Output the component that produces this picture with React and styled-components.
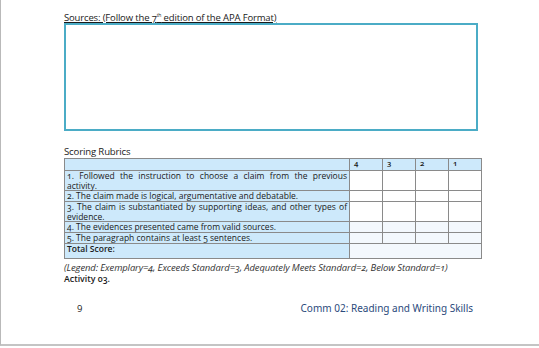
import React from 'react'
import styled, { createGlobalStyle } from 'styled-components'

const GlobalStyle = createGlobalStyle`
  html, body {
    margin: 0;
    padding: 0;
    background: #ffffff;
  }
  body {
    font-family: "Open Sans", "Noto Sans", sans-serif;
    color: #1a1a1a;
  }
`

const Page = styled.div`
  width: 539px;
  height: 346px;
  box-sizing: border-box;
  border-left: 1px solid #b9b9b9;
  border-bottom: 2px solid #c4c4c4;
  padding: 12px 0 0 63px;
  display: flex;
  flex-direction: column;
  font-variant-numeric: oldstyle-nums;
`

const Heading = styled.div`
  font-size: ${p => p.$size || 9.5}px;
  line-height: 11px;
  letter-spacing: -0.15px;
  text-decoration: ${p => (p.$underline ? 'underline' : 'none')};
  margin-top: ${p => p.$top || 0}px;
  sup {
    font-size: 5px;
    line-height: 0;
  }
`

const SourceBox = styled.div`
  width: 414px;
  height: 108px;
  box-sizing: border-box;
  border: 2px solid #4bacc6;
`

const Rubric = styled.table`
  margin-top: 1px;
  width: 418px;
  border-collapse: collapse;
  table-layout: fixed;
  font-size: 8.5px;
  line-height: 9.5px;
`

const Cell = styled.td`
  border: 1px solid #8a8a8a;
  padding: 0 2px;
  vertical-align: top;
  background: ${p => p.$bg || '#ffffff'};
  font-weight: ${p => (p.$bold ? 600 : 400)};
  height: ${p => p.$h || 10}px;
`

const HeadCell = styled(Cell)`
  padding-left: 4px;
  font-size: 7.8px;
  font-weight: 600;
`

const Line = styled.div`
  text-align: ${p => (p.$justify ? 'justify' : 'left')};
  text-align-last: ${p => (p.$justify ? 'justify' : 'left')};
`

const Legend = styled.div`
  margin-top: 3px;
  font-size: 9.45px;
  line-height: 12px;
  font-style: italic;
  color: #333333;
  letter-spacing: -0.1px;
`

const Activity = styled.div`
  font-size: 8.8px;
  line-height: 11px;
  font-weight: 600;
`

const Footer = styled.div`
  margin-top: 16px;
  width: 409px;
  box-sizing: border-box;
  padding-left: 13px;
  display: flex;
  justify-content: space-between;
  align-items: baseline;
`

const PageNum = styled.span`
  font-size: 9.5px;
  font-variant-numeric: lining-nums;
`

const Course = styled.span`
  font-family: "Noto Sans", "DejaVu Sans", sans-serif;
  font-size: 10px;
  color: #2b4a7c;
  font-variant-numeric: lining-nums;
`

const BLUE = '#cde9fb'
const PALE = '#f3f8fd'

const rows = [
  { lines: ['1. Followed the instruction to choose a claim from the previous', 'activity.'], h: 19, score: '#ffffff' },
  { lines: ['2. The claim made is logical, argumentative and debatable.'], h: 10, score: '#ffffff' },
  { lines: ['3. The claim is substantiated by supporting ideas, and other types of', 'evidence.'], h: 19, score: '#ffffff' },
  { lines: ['4. The evidences presented came from valid sources.'], h: 10, score: PALE },
  { lines: ['5. The paragraph contains at least 5 sentences.'], h: 10, score: PALE },
]

export default function App() {
  return (
    <>
      <GlobalStyle />
      <Page>
        <Heading $underline>
          Sources: (Follow the 7<sup>th</sup> edition of the APA Format)
        </Heading>
        <SourceBox />
        <Heading $top={15} $size={9.6}>Scoring Rubrics</Heading>
        <Rubric>
          <colgroup>
            <col style={{ width: 285 }} />
            <col />
            <col />
            <col />
            <col />
          </colgroup>
          <tbody>
            <tr>
              <Cell $bg={BLUE} $h={11} />
              {['4', '3', '2', '1'].map(n => (
                <HeadCell key={n} $bg={BLUE}>{n}</HeadCell>
              ))}
            </tr>
            {rows.map(r => (
              <tr key={r.lines[0]}>
                <Cell $bg={BLUE} $h={r.h}>
                  {r.lines.map((l, i) => (
                    <Line key={l} $justify={r.lines.length > 1 && i === 0}>{l}</Line>
                  ))}
                </Cell>
                <Cell $bg={r.score} />
                <Cell $bg={r.score} />
                <Cell $bg={r.score} />
                <Cell $bg={r.score} />
              </tr>
            ))}
            <tr>
              <Cell $bg={BLUE} $h={14} $bold>Total Score:</Cell>
              <Cell $bg={PALE} colSpan={4} />
            </tr>
          </tbody>
        </Rubric>
        <Legend>
          (Legend: Exemplary=4, Exceeds Standard=3, Adequately Meets Standard=2, Below Standard=1)
        </Legend>
        <Activity>Activity 03.</Activity>
        <Footer>
          <PageNum>9</PageNum>
          <Course>Comm 02: Reading and Writing Skills</Course>
        </Footer>
      </Page>
    </>
  )
}
